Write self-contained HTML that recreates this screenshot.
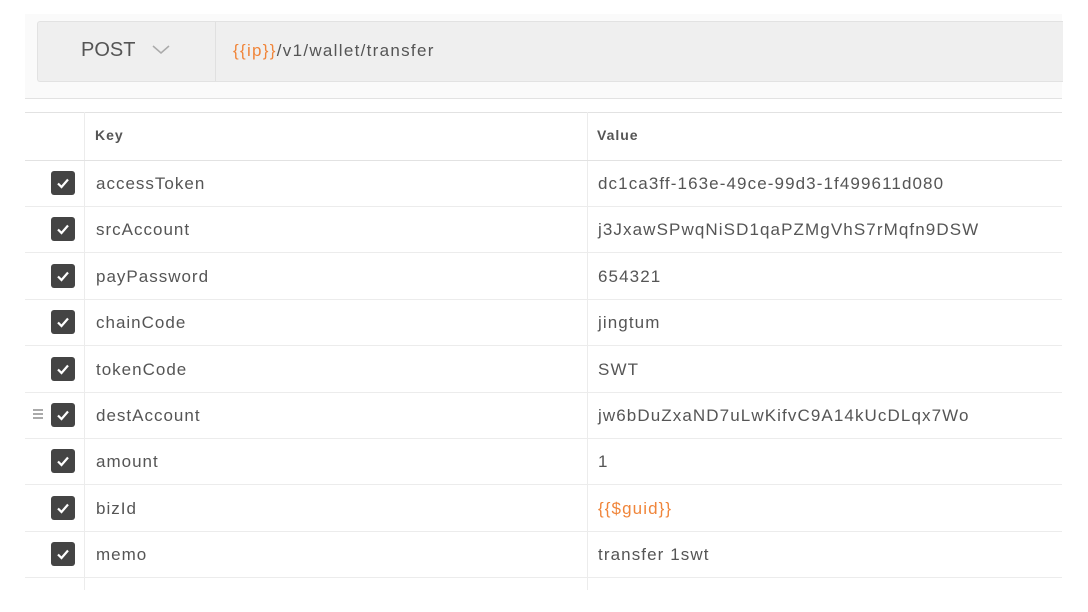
<!DOCTYPE html>
<html><head><style>
body{margin:0;width:1088px;height:612px;background:#fff;position:relative;overflow:hidden;font-family:"Liberation Sans",sans-serif;color:#555}
.abs{position:absolute}
.panel{left:25px;top:14px;width:1037px;height:84px;background:#fafafa;border-bottom:1px solid #e2e2e2}
.bar{left:37px;top:21px;width:1025px;height:59px;background:#efefef;border:1px solid #e2e2e2;border-right:none;border-radius:3px 0 0 3px}
.sep{left:215px;top:22px;width:1px;height:59px;background:#e0e0e0}
.hline{left:25px;width:1037px;height:1px;background:#ececec}
.vline{width:1px;background:#ececec}
.cb{left:51px;width:24px;height:24px;background:#444;border-radius:3px}
.k{left:96px;font-size:17px;letter-spacing:1px}
.v{left:598px;font-size:17px;letter-spacing:1.1px}
.o{color:#f0853a}
</style></head><body>
<div class="abs panel"></div>
<div class="abs bar"></div>
<div class="abs sep"></div>
<div class="abs" style="left:81px;top:39px;font-size:20px;color:#555">POST</div>
<svg class="abs" style="left:152px;top:44px" width="18" height="12"><path d="M1 2 L9 9 L17 2" fill="none" stroke="#aaa" stroke-width="1.5"/></svg>
<div class="abs" style="left:233px;top:41px;font-size:17px;color:#555;letter-spacing:1.3px"><span class="o">{{ip}}</span>/v1/wallet/transfer</div>
<div class="abs hline" style="top:112px;background:#e2e2e2"></div>
<div class="abs vline" style="left:84px;top:112px;height:478px"></div>
<div class="abs vline" style="left:587px;top:112px;height:478px"></div>
<div class="abs" style="left:95px;top:127px;font-size:14px;font-weight:bold;color:#555;letter-spacing:1px">Key</div>
<div class="abs" style="left:597px;top:127px;font-size:14px;font-weight:bold;color:#555;letter-spacing:1px">Value</div>
<div class="abs hline" style="top:160px;background:#e2e2e2"></div>
<div id="rows"></div>
<script>
var d=[["accessToken","dc1ca3ff-163e-49ce-99d3-1f499611d080"],["srcAccount","j3JxawSPwqNiSD1qaPZMgVhS7rMqfn9DSW"],["payPassword","654321"],["chainCode","jingtum"],["tokenCode","SWT"],["destAccount","jw6bDuZxaND7uLwKifvC9A14kUcDLqx7Wo"],["amount","1"],["bizId",'<span class="o">{{$guid}}</span>'],["memo","transfer 1swt"]];
var h="";
for(var i=0;i<9;i++){var t=160+i*46.4;
h+='<div class="abs cb" style="top:'+(t+11)+'px"><svg width="24" height="24"><path d="M7 12.5 L10.5 16 L17 8.5" fill="none" stroke="#fff" stroke-width="2.2"/></svg></div>';
h+='<div class="abs k" style="top:'+(t+14)+'px">'+d[i][0]+'</div>';
h+='<div class="abs v" style="top:'+(t+14)+'px">'+d[i][1]+'</div>';
h+='<div class="abs hline" style="top:'+(t+46)+'px"></div>';}
h+='<div class="abs" style="left:33px;top:'+(160+5*46.4+17)+'px;width:10px;height:10px;background:repeating-linear-gradient(#aaa 0 2px,transparent 2px 4px)"></div>';
document.getElementById("rows").innerHTML=h;
</script>
</body></html>
